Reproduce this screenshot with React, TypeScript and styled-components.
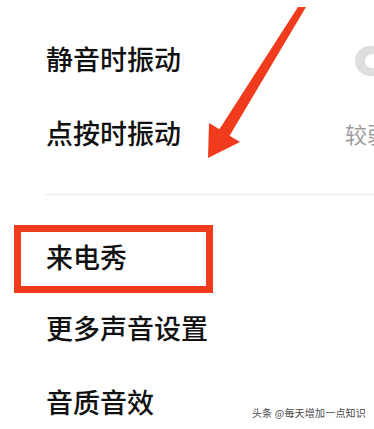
import React from 'react';
import styled, { createGlobalStyle } from 'styled-components';

const GlobalStyle = createGlobalStyle`
  html, body {
    margin: 0;
    padding: 0;
    background: #ffffff;
    overflow: hidden;
  }
  body {
    font-family: "Noto Sans CJK SC", "Noto Sans", sans-serif;
  }
`;

const RED = '#f03b1c';

const Frame = styled.div`
  position: relative;
  width: 374px;
  height: 429px;
  overflow: hidden;
  background: #fff;
`;

const Screen = styled.div`
  width: 430px;
  padding-top: 24px;
  display: flex;
  flex-direction: column;
`;

const Row = styled.div`
  height: 74px;
  display: flex;
  align-items: center;
  justify-content: space-between;
  padding: 0 25px 0 46px;
`;

const Label = styled.span`
  font-size: 27px;
  font-weight: 500;
  line-height: 1;
  margin-bottom: 6px;
  color: #111;
`;

const Value = styled.span`
  display: flex;
  align-items: center;
  gap: 6px;
  margin-bottom: 4px;
  font-size: 22px;
  line-height: 1;
  color: #9c9c9c;
`;

const Divider = styled.div`
  margin: 22px 0 0 45px;
  height: 1px;
  background: #ececec;
`;

const Highlight = styled.div`
  box-sizing: border-box;
  margin: 30px 0 0 14px;
  width: 199px;
  height: 68px;
  border: 7px solid ${RED};
  padding-left: 25px;
  display: flex;
  align-items: center;
`;

const Toggle = styled.div<{ $on?: boolean }>`
  position: relative;
  width: 50px;
  height: 30px;
  border-radius: 15px;
  background: ${(p) => (p.$on ? '#0d84ff' : '#dedede')};
  &::after {
    content: '';
    position: absolute;
    top: 8px;
    left: ${(p) => (p.$on ? '26px' : '10px')};
    width: 14px;
    height: 14px;
    border-radius: 50%;
    background: #fff;
  }
`;

const Arrow = styled.svg`
  position: absolute;
  left: 0;
  top: 0;
  pointer-events: none;
`;

const Watermark = styled.span`
  position: absolute;
  right: 8px;
  bottom: 11px;
  font-size: 10px;
  line-height: 1;
  color: #4a4a4a;
  letter-spacing: 0.2px;
`;

function Chevron() {
  return (
    <svg width="10" height="16" viewBox="0 0 10 16">
      <path d="M2 2l6 6-6 6" fill="none" stroke="#c4c4c4" strokeWidth="2" />
    </svg>
  );
}

export default function App() {
  return (
    <>
      <GlobalStyle />
      <Frame>
        <Screen>
          <Row>
            <Label>静音时振动</Label>
            <Toggle />
          </Row>
          <Row>
            <Label>点按时振动</Label>
            <Value>
              较弱
              <Chevron />
            </Value>
          </Row>
          <Divider />
          <Highlight>
            <Label>来电秀</Label>
          </Highlight>
          <Row>
            <Label>更多声音设置</Label>
          </Row>
          <Row>
            <Label>音质音效</Label>
          </Row>
        </Screen>
        <Arrow width="374" height="429" viewBox="0 0 374 429">
          <polygon
            points="298,7 306,7 229.6,135.7 240,142 208,158 209,123 219.4,129.3"
            fill={RED}
          />
        </Arrow>
        <Watermark>头条 @每天增加一点知识</Watermark>
      </Frame>
    </>
  );
}
